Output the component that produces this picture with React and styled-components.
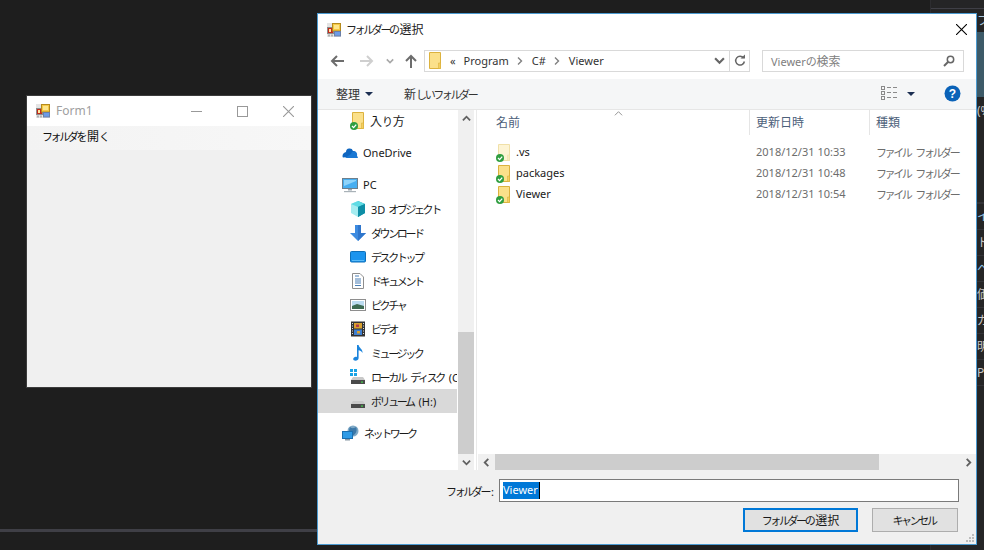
import React from 'react'
import styled, { createGlobalStyle } from 'styled-components'

const GlobalStyle = createGlobalStyle`
  html, body {
    margin: 0;
    padding: 0;
    background: #1e1e1e;
  }
  * {
    box-sizing: border-box;
  }
`

const Screen = styled.div`
  position: relative;
  width: 984px;
  height: 550px;
  overflow: hidden;
  display: flex;
  background: #1e1e1e;
  font-family: 'Noto Sans', 'Noto Sans CJK JP', sans-serif;
  font-size: 11px;
  color: #1a1a1a;
`

const KanaRun = styled.span`
  font-size: 11px;
  letter-spacing: -2.4px;
  padding-right: 2px;
`

const KanjiRun = styled.span`
  font-size: 12px;
`

// Meiryo UI style: kana much narrower than kanji
const Jp = ({ children }) => (
  <span>
    {children.split(/([\u3040-\u30ff]+|[\u4e00-\u9fff]+)/).map((run, i) => {
      if (/[\u3040-\u30ff]/.test(run)) return <KanaRun key={i}>{run}</KanaRun>
      if (/[\u4e00-\u9fff]/.test(run)) return <KanjiRun key={i}>{run}</KanjiRun>
      return run
    })}
  </span>
)

const EditorArea = styled.div`
  flex: 1;
  padding-top: 529px;
`

const Rule = styled.div`
  height: 3px;
  background: #3f3f46;
`

const SidePanel = styled.div`
  width: 54px;
  display: flex;
  flex-direction: column;
  overflow: hidden;
  border-left: 1px solid #2d2d30;
  background: #252526;
  font-size: 12px;
`

const PanelTop = styled.div`
  height: 9px;
  border-bottom: 1px solid #3f3f46;
`

const PanelTitle = styled.div`
  height: 23px;
  padding-left: 46px;
  line-height: 23px;
  white-space: nowrap;
  color: #a8c6dc;
`

const PanelBanner = styled.div`
  height: 65px;
  background: #3d5a68;
`

const PanelGap = styled.div`
  height: 107px;
  padding-left: 46px;
  padding-top: 5px;
  white-space: nowrap;
  color: #c8c8c8;
  border-bottom: 2px solid #333337;
`

const PanelRow = styled.div`
  height: 26px;
  padding-left: 46px;
  line-height: 26px;
  white-space: nowrap;
  color: ${p => p.$accent ? '#8fc3ea' : '#c8c8c8'};
  border-bottom: 1px solid #333337;
`

const Form = styled.div`
  position: absolute;
  left: 26px;
  top: 95px;
  width: 286px;
  height: 293px;
  display: flex;
  flex-direction: column;
  border: 1px solid #3c3c3c;
  background: #f0f0f0;
`

const FormTitle = styled.div`
  height: 30px;
  flex: none;
  display: flex;
  align-items: center;
  padding-left: 9px;
  background: #fff;
  color: #a0a0a0;
`

const FormTitleText = styled.span`
  margin-left: 6px;
  margin-bottom: 2px;
  flex: 1;
  font-size: 12px;
`

const WinButton = styled.div`
  width: 46px;
  height: 30px;
  display: flex;
  align-items: center;
  justify-content: center;
`

const MenuStrip = styled.div`
  height: 24px;
  flex: none;
  padding-left: 15px;
  line-height: 22px;
  color: #111;
  background: linear-gradient(to right, #f3f3f3, #f7f7f7);
`

const Dialog = styled.div`
  position: absolute;
  left: 317px;
  top: 13px;
  width: 660px;
  height: 532px;
  display: flex;
  flex-direction: column;
  border: 1px solid #4b9ad0;
  background: #fff;
`

const DialogTitle = styled.div`
  height: 31px;
  flex: none;
  display: flex;
  align-items: center;
  padding-left: 9px;
  color: #222;
`

const DialogTitleText = styled.span`
  margin-left: 5px;
  margin-bottom: 2px;
  flex: 1;
`

const CloseButton = styled.div`
  width: 30px;
  height: 31px;
  display: flex;
  align-items: center;
  justify-content: center;
`

const NavBar = styled.div`
  height: 34px;
  flex: none;
  display: flex;
  align-items: center;
  padding-left: 4px;
  padding-bottom: 3px;
`

const NavButton = styled.div`
  width: ${p => p.$w}px;
  height: 22px;
  display: flex;
  align-items: center;
  justify-content: center;
`

const AddressBox = styled.div`
  width: 326px;
  height: 22px;
  margin-right: 12px;
  display: flex;
  align-items: center;
  padding-left: 2px;
  border: 1px solid #d9d9d9;
  color: #333;
`

const Crumb = styled.span`
  margin-left: ${p => p.$gap}px;
  white-space: nowrap;
`

const CrumbSep = styled.span`
  margin-left: ${p => p.$gap}px;
  display: flex;
`

const AddressEnd = styled.div`
  margin-left: auto;
  display: flex;
  align-items: center;
  height: 100%;
`

const RefreshButton = styled.div`
  width: 20px;
  height: 100%;
  margin-left: 4px;
  display: flex;
  align-items: center;
  justify-content: center;
  border-left: 1px solid #d9d9d9;
`

const SearchBox = styled.div`
  width: 202px;
  height: 22px;
  display: flex;
  align-items: center;
  justify-content: space-between;
  padding: 0 8px;
  border: 1px solid #d9d9d9;
  color: #808080;
`

const ToolBar = styled.div`
  height: 31px;
  flex: none;
  display: flex;
  align-items: center;
  padding-left: 18px;
  padding-bottom: 1px;
  background: #f5f6f7;
  border-bottom: 1px solid #e6e6e6;
  color: #333;
`

const ToolLabel = styled.span`
  white-space: nowrap;
`

const ToolSpacer = styled.div`
  flex: 1;
`

const Caret = styled.span`
  width: 0;
  height: 0;
  border-left: 4px solid transparent;
  border-right: 4px solid transparent;
  border-top: 4px solid #1c2f52;
  margin-left: ${p => p.$gap}px;
  margin-right: ${p => p.$after}px;
`

const HelpSlot = styled.span`
  display: flex;
  margin-right: 15px;
`

const Body = styled.div`
  height: 360px;
  flex: none;
  display: grid;
  grid-template-columns: 140px 16px 4px 1fr;
`

const Tree = styled.div`
  overflow: hidden;
  padding-right: 1px;
  margin-top: -1px;
`

const TreeGroup = styled.div`
  margin-bottom: 8px;
`

const TreeRow = styled.div`
  height: 24px;
  display: flex;
  align-items: center;
  gap: 5px;
  padding-left: ${p => p.$child ? 32 : 24}px;
  white-space: nowrap;
  overflow: hidden;
  color: #1a1a1a;
  background: ${p => p.$selected ? '#d9d9d9' : 'transparent'};
  svg {
    flex: none;
  }
`

const LatinLabel = styled.span`
  padding-bottom: 2px;
`

const VScroll = styled.div`
  display: flex;
  flex-direction: column;
  background: #f0f0f0;
`

const ScrollButton = styled.div`
  flex: none;
  width: ${p => p.$w || 16}px;
  height: 16px;
  display: flex;
  align-items: center;
  justify-content: center;
  background: #f0f0f0;
`

const VTrack = styled.div`
  flex: 1;
  padding-top: 206px;
`

const VThumb = styled.div`
  height: 100%;
  background: #cdcdcd;
`

const Splitter = styled.div`
  position: relative;
  &::after {
    content: '';
    position: absolute;
    left: 2px;
    top: 0;
    bottom: 0;
    width: 1px;
    background: #eaeaea;
  }
`

const ListPane = styled.div`
  display: flex;
  flex-direction: column;
  min-width: 0;
`

const ListHeader = styled.div`
  position: relative;
  height: 25px;
  flex: none;
  display: grid;
  grid-template-columns: 272px 120px 1fr;
  color: #4c607a;
`

const HeaderCell = styled.div`
  padding-left: ${p => p.$pad}px;
  line-height: 25px;
  border-right: ${p => p.$last ? 'none' : '1px solid #e5e5e5'};
`

const SortMark = styled.span`
  position: absolute;
  left: 136px;
  top: -1px;
  display: flex;
`

const ListRows = styled.div`
  flex: 1;
  padding-top: 7px;
`

const FileRow = styled.div`
  height: 21px;
  display: grid;
  grid-template-columns: 272px 120px 1fr;
  align-items: center;
`

const FileName = styled.div`
  display: flex;
  align-items: center;
  gap: 5px;
  padding-left: 18px;
  color: #1a1a1a;
`

const FileMeta = styled.div`
  padding: 0 0 2px 6px;
  white-space: nowrap;
  color: #6d6d6d;
`

const HScroll = styled.div`
  height: 16px;
  flex: none;
  display: flex;
  background: #f0f0f0;
`

const HThumb = styled.div`
  width: 384px;
  background: #cdcdcd;
`

const HTrack = styled.div`
  flex: 1;
`

const Footer = styled.div`
  position: relative;
  flex: 1;
  display: flex;
  flex-direction: column;
  gap: 6px;
  padding: 9px 17px 0 0;
  background: #f0f0f0;
`

const InputRow = styled.div`
  display: flex;
  align-items: center;
  justify-content: flex-end;
  gap: 5px;
`

const InputLabel = styled.label`
  color: #1a1a1a;
`

const TextInput = styled.div`
  width: 460px;
  height: 23px;
  padding: 2px 0 0 3px;
  border: 1px solid #7a7a7a;
  background: #fff;
  display: flex;
  align-items: flex-start;
`

const Selection = styled.span`
  height: 17px;
  line-height: 16px;
  padding-right: 1px;
  background: #0078d7;
  color: #fff;
`

const TextCaret = styled.span`
  width: 1px;
  height: 17px;
  background: #000;
`

const ButtonRow = styled.div`
  display: flex;
  justify-content: flex-end;
  gap: 14px;
  padding-right: 1px;
`

const DialogButton = styled.div`
  width: ${p => p.$w}px;
  height: 24px;
  display: flex;
  align-items: center;
  justify-content: center;
  background: #e1e1e1;
  border: ${p => p.$primary ? '2px solid #0078d7' : '1px solid #adadad'};
  color: #1a1a1a;
`

const Grip = styled.span`
  position: absolute;
  right: 1px;
  bottom: 1px;
  display: flex;
`

const AppIcon = () => (
  <svg width="14" height="14" viewBox="0 0 14 14">
    <rect x="0" y="0" width="14" height="14" fill="#e4e4e4" />
    <rect x="0.5" y="4.5" width="6" height="6" fill="#c4281c" stroke="#8c8c8c" />
    <rect x="2" y="6" width="2" height="3" fill="#ffe9a0" />
    <rect x="5.5" y="0.5" width="8" height="7.5" fill="#f6c944" stroke="#b58a1c" />
    <rect x="7" y="2" width="5" height="4" fill="#fde58a" />
    <rect x="7.5" y="8.5" width="6" height="4.5" fill="#6c9be6" stroke="#6a7fa6" />
    <rect x="1" y="11.5" width="2" height="2" fill="#b0b0b0" />
    <rect x="4" y="11.5" width="2" height="2" fill="#b0b0b0" />
  </svg>
)

const Cross = ({ size, color }) => (
  <svg width={size} height={size} viewBox="0 0 10 10">
    <path d="M0 0L10 10M10 0L0 10" stroke={color} strokeWidth="1" fill="none" />
  </svg>
)

const Chevron = ({ dir = 'down', color = '#606060', size = 9, width = 2 }) => {
  const paths = {
    down: 'M1 3L5 7L9 3',
    up: 'M1 7L5 3L9 7',
    left: 'M7 1L3 5L7 9',
    right: 'M3 1L7 5L3 9',
  }
  return (
    <svg width={size} height={size} viewBox="0 0 10 10">
      <path d={paths[dir]} stroke={color} strokeWidth={width} fill="none" />
    </svg>
  )
}

const Arrow = ({ dir, color }) => {
  const paths = {
    left: 'M14 7H2M7 2L2 7L7 12',
    right: 'M0 7H12M7 2L12 7L7 12',
    up: 'M7 14V2M2 7L7 2L12 7',
  }
  return (
    <svg width="14" height="14" viewBox="0 0 14 14">
      <path d={paths[dir]} stroke={color} strokeWidth="2" fill="none" />
    </svg>
  )
}

const Check = ({ x, y }) => (
  <g transform={`translate(${x} ${y})`}>
    <circle cx="4" cy="4" r="4" fill="#2f9e3f" />
    <path d="M2 4L3.6 5.6L6.2 2.6" stroke="#fff" strokeWidth="1.3" fill="none" />
  </g>
)

const FolderIcon = ({ synced, faded }) => (
  <svg width="15" height="18" viewBox="0 0 15 18">
    <path
      d="M2.5 0.5H13.5V16.5H2.5Z"
      fill={faded ? '#fdf4d4' : '#fbe08a'}
      stroke={faded ? '#f0e0a8' : '#dcb23e'}
    />
    <path d="M11.5 11V16.5H13.5V11Z" fill={faded ? '#f8ecc0' : '#f4cf5f'} stroke={faded ? '#f0e0a8' : '#dcb23e'} strokeWidth="0.6" />
    {synced && <Check x={0} y={10} />}
  </svg>
)

const RefreshIcon = () => (
  <svg width="12" height="13" viewBox="0 0 12 13">
    <path d="M9.6 4A4.4 4.4 0 1 0 10.4 7.5" stroke="#666" strokeWidth="1.5" fill="none" />
    <path d="M6.5 4.5H11V0.5Z" fill="#666" />
  </svg>
)

const SearchIcon = () => (
  <svg width="12" height="12" viewBox="0 0 12 12">
    <circle cx="7.5" cy="4.5" r="3.2" stroke="#666" strokeWidth="1.5" fill="none" />
    <path d="M5 7L1 11" stroke="#666" strokeWidth="2" fill="none" />
  </svg>
)

const ViewIcon = () => (
  <svg width="17" height="15" viewBox="0 0 17 15">
    <g fill="none" stroke="#8a8a8a">
      <rect x="0.5" y="0.5" width="3" height="3" />
      <rect x="0.5" y="5.5" width="3" height="3" />
      <rect x="0.5" y="10.5" width="3" height="3" />
    </g>
    <path d="M6 1.5H10M12 1.5H16M6 6.5H10M12 6.5H16M6 11.5H10M12 11.5H16" stroke="#8a8a8a" fill="none" />
  </svg>
)

const HelpIcon = () => (
  <svg width="17" height="17" viewBox="0 0 17 17">
    <circle cx="8.5" cy="8.5" r="8" fill="#0a62b8" />
    <text x="8.5" y="13" textAnchor="middle" fontFamily="Liberation Sans, sans-serif" fontWeight="700" fontSize="12" fill="#fff">?</text>
  </svg>
)

const CloudIcon = () => (
  <svg width="16" height="16" viewBox="0 0 16 16">
    <path d="M4 7A3.6 3.6 0 0 1 11 6A3 3 0 0 1 14.5 8.2L6 12L1 12.6C0 11 0.6 8 4 7Z" fill="#0f66c0" />
    <path d="M3 13L9 9A3 3 0 0 1 15 10.5L16 13Z" fill="#1a78d4" />
  </svg>
)

const PcIcon = () => (
  <svg width="16" height="16" viewBox="0 0 16 16">
    <rect x="0.5" y="1.5" width="15" height="10" fill="#47aef0" stroke="#6d7f8c" />
    <path d="M2 3H14V4L2 9Z" fill="#8fd4fa" />
    <rect x="6" y="12" width="4" height="1.5" fill="#9aa5ad" />
    <rect x="2" y="14" width="12" height="1.2" fill="#a9b2b8" />
  </svg>
)

const CubeIcon = () => (
  <svg width="16" height="16" viewBox="0 0 16 16">
    <path d="M8 0L15 3V12L8 16Z" fill="#149eb0" />
    <path d="M8 0L1 3V12L8 16Z" fill="#a5ecf0" />
    <path d="M1 3L8 6L15 3L8 0Z" fill="#5fdbe4" />
    <path d="M8 6V16L15 12V3Z" fill="#0e8ea6" />
  </svg>
)

const DownloadIcon = () => (
  <svg width="16" height="16" viewBox="0 0 16 16">
    <path d="M5 0H11V8H16L8 16L0 8H5Z" fill="#3d8be0" />
    <path d="M8 0H11V8H16L8 16Z" fill="#2f76cc" />
  </svg>
)

const DesktopIcon = () => (
  <svg width="16" height="16" viewBox="0 0 16 16">
    <rect x="0.5" y="2.5" width="15" height="10.5" rx="1" fill="#1b94ee" stroke="#0e6fb8" />
    <rect x="2" y="11" width="12" height="1" fill="#5cbcf8" />
  </svg>
)

const DocIcon = () => (
  <svg width="16" height="16" viewBox="0 0 16 16">
    <path d="M2.5 0.5H10L13.5 4V15.5H2.5Z" fill="#fff" stroke="#8e8e8e" />
    <path d="M5 3H9M5 6H11M5 8H11M5 10H11M5 12.5H11" stroke="#4a7fb5" fill="none" />
  </svg>
)

const PictureIcon = () => (
  <svg width="16" height="16" viewBox="0 0 16 16">
    <rect x="0.5" y="2.5" width="15" height="11" fill="#fff" stroke="#8e8e8e" />
    <rect x="2" y="4" width="12" height="8" fill="#bcdcf0" />
    <path d="M2 9L7 7L14 9V12H2Z" fill="#3d6b52" />
  </svg>
)

const VideoIcon = () => (
  <svg width="16" height="16" viewBox="0 0 16 16">
    <rect x="1" y="0.5" width="14" height="15" fill="#333" />
    <rect x="4" y="2" width="8" height="5.5" fill="#d9a02e" />
    <rect x="4" y="8.5" width="8" height="5.5" fill="#3f7fd0" />
    <rect x="6" y="3.5" width="3" height="2.5" fill="#b13c4e" />
    <rect x="7" y="10" width="3" height="2.5" fill="#d9a02e" />
    <path d="M2.5 2V14M13.5 2V14" stroke="#ddd" strokeDasharray="1 1.5" fill="none" />
  </svg>
)

const MusicIcon = () => (
  <svg width="16" height="16" viewBox="0 0 16 16">
    <path d="M7 0H8.6C9 3 13 4 12.5 8C11.5 6 10 5.5 8.6 5.2V13C8.6 15 6.5 16 4.5 15.6C2.5 15 3 12.6 5 12C5.7 11.8 6.4 11.8 7 12Z" fill="#1b84dc" />
  </svg>
)

const DiskIcon = ({ windows }) => (
  <svg width="16" height="16" viewBox="0 0 16 16">
    {windows && (
      <g fill="#18a3e6">
        <rect x="0" y="0" width="3" height="3" />
        <rect x="4" y="0" width="3" height="3" />
        <rect x="0" y="4" width="3" height="3" />
        <rect x="4" y="4" width="3" height="3" />
      </g>
    )}
    <path d="M3 8H13L15 11H1Z" fill="#c9c9c9" />
    <rect x="1" y="11" width="14" height="4" fill="#4a4a4a" />
    <rect x="11" y="12.5" width="2" height="1.2" fill="#44d04a" />
  </svg>
)

const NetworkIcon = () => (
  <svg width="17" height="16" viewBox="0 0 17 16">
    <circle cx="11" cy="6" r="5.5" fill="#7fa9c6" />
    <path d="M8 2C10 4 13 3 14 2C16 6 13 10 10 11C10 8 7 7 7 5Z" fill="#3c78a8" />
    <rect x="0.5" y="6.5" width="10" height="7" fill="#2f9be6" stroke="#1b70b0" />
    <rect x="3" y="14" width="5" height="1.5" fill="#8a9aa6" />
  </svg>
)

const Separator = () => (
  <svg width="6" height="8" viewBox="0 0 6 8">
    <path d="M1 0.5L4.5 4L1 7.5" stroke="#808080" strokeWidth="1.4" fill="none" />
  </svg>
)

const GripIcon = () => (
  <svg width="9" height="9" viewBox="0 0 9 9" fill="#bcbcbc">
    <rect x="6" y="0" width="2" height="2" />
    <rect x="3" y="3" width="2" height="2" />
    <rect x="6" y="3" width="2" height="2" />
    <rect x="0" y="6" width="2" height="2" />
    <rect x="3" y="6" width="2" height="2" />
    <rect x="6" y="6" width="2" height="2" />
  </svg>
)

const pcItems = [
  { label: '3D オブジェクト', icon: <CubeIcon /> },
  { label: 'ダウンロード', icon: <DownloadIcon /> },
  { label: 'デスクトップ', icon: <DesktopIcon /> },
  { label: 'ドキュメント', icon: <DocIcon /> },
  { label: 'ピクチャ', icon: <PictureIcon /> },
  { label: 'ビデオ', icon: <VideoIcon /> },
  { label: 'ミュージック', icon: <MusicIcon /> },
  { label: 'ローカル ディスク (C:)', icon: <DiskIcon windows /> },
  { label: 'ボリューム (H:)', icon: <DiskIcon />, selected: true },
]

const files = [
  { name: '.vs', date: '2018/12/31 10:33', faded: true },
  { name: 'packages', date: '2018/12/31 10:48' },
  { name: 'Viewer', date: '2018/12/31 10:54' },
]

const panelRows = [
  { text: 'イ', accent: true },
  { text: 'ト' },
  { text: 'ヘ', accent: true },
  { text: '価' },
  { text: 'ガ' },
  { text: '明' },
  { text: 'P' },
]

export default function App() {
  return (
    <Screen>
      <GlobalStyle />
      <EditorArea>
        <Rule />
      </EditorArea>
      <SidePanel>
        <PanelTop />
        <PanelTitle>ファイル</PanelTitle>
        <PanelBanner />
        <PanelGap>(%)</PanelGap>
        {panelRows.map(r => (
          <PanelRow key={r.text} $accent={r.accent}>{r.text}</PanelRow>
        ))}
      </SidePanel>

      <Form>
        <FormTitle>
          <AppIcon />
          <FormTitleText>Form1</FormTitleText>
          <WinButton>
            <svg width="11" height="11" viewBox="0 0 11 11">
              <path d="M0 5.5H11" stroke="#999" fill="none" />
            </svg>
          </WinButton>
          <WinButton>
            <svg width="11" height="11" viewBox="0 0 11 11">
              <rect x="0.5" y="0.5" width="10" height="10" stroke="#999" fill="none" />
            </svg>
          </WinButton>
          <WinButton>
            <Cross size={11} color="#999" />
          </WinButton>
        </FormTitle>
        <MenuStrip><Jp>フォルダを開く</Jp></MenuStrip>
      </Form>

      <Dialog>
        <DialogTitle>
          <AppIcon />
          <DialogTitleText><Jp>フォルダーの選択</Jp></DialogTitleText>
          <CloseButton>
            <Cross size={11} color="#000" />
          </CloseButton>
        </DialogTitle>

        <NavBar>
          <NavButton $w={30}><Arrow dir="left" color="#6d6d6d" /></NavButton>
          <NavButton $w={30}><Arrow dir="right" color="#cfcfcf" /></NavButton>
          <NavButton $w={16}><Chevron color="#a8a8a8" size={8} /></NavButton>
          <NavButton $w={26}><Arrow dir="up" color="#6d6d6d" /></NavButton>
          <AddressBox>
            <FolderIcon />
            <Crumb $gap={8}>«</Crumb>
            <Crumb $gap={8}>Program</Crumb>
            <CrumbSep $gap={8}><Separator /></CrumbSep>
            <Crumb $gap={9}>C#</Crumb>
            <CrumbSep $gap={8}><Separator /></CrumbSep>
            <Crumb $gap={9}>Viewer</Crumb>
            <AddressEnd>
              <Chevron color="#666" size={11} />
              <RefreshButton><RefreshIcon /></RefreshButton>
            </AddressEnd>
          </AddressBox>
          <SearchBox>
            <Jp>Viewerの検索</Jp>
            <SearchIcon />
          </SearchBox>
        </NavBar>

        <ToolBar>
          <ToolLabel><Jp>整理</Jp></ToolLabel>
          <Caret $gap={5} $after={31} />
          <ToolLabel><Jp>新しいフォルダー</Jp></ToolLabel>
          <ToolSpacer />
          <ViewIcon />
          <Caret $gap={9} $after={29} />
          <HelpSlot><HelpIcon /></HelpSlot>
        </ToolBar>

        <Body>
          <Tree>
            <TreeGroup>
              <TreeRow $child><FolderIcon synced /><Jp>入り方</Jp></TreeRow>
            </TreeGroup>
            <TreeGroup>
              <TreeRow><CloudIcon /><LatinLabel>OneDrive</LatinLabel></TreeRow>
            </TreeGroup>
            <TreeGroup>
              <TreeRow><PcIcon /><LatinLabel>PC</LatinLabel></TreeRow>
              {pcItems.map(item => (
                <TreeRow key={item.label} $child $selected={item.selected}>
                  {item.icon}
                  <Jp>{item.label}</Jp>
                </TreeRow>
              ))}
            </TreeGroup>
            <TreeGroup>
              <TreeRow><NetworkIcon /><Jp>ネットワーク</Jp></TreeRow>
            </TreeGroup>
          </Tree>

          <VScroll>
            <ScrollButton><Chevron dir="up" /></ScrollButton>
            <VTrack><VThumb /></VTrack>
            <ScrollButton><Chevron dir="down" /></ScrollButton>
          </VScroll>

          <Splitter />

          <ListPane>
            <ListHeader>
              <HeaderCell $pad={18}><Jp>名前</Jp></HeaderCell>
              <HeaderCell $pad={6}><Jp>更新日時</Jp></HeaderCell>
              <HeaderCell $pad={6} $last><Jp>種類</Jp></HeaderCell>
              <SortMark><Chevron dir="up" color="#8a8a8a" width={1} size={9} /></SortMark>
            </ListHeader>
            <ListRows>
              {files.map(f => (
                <FileRow key={f.name}>
                  <FileName>
                    <FolderIcon synced faded={f.faded} />
                    <LatinLabel>{f.name}</LatinLabel>
                  </FileName>
                  <FileMeta>{f.date}</FileMeta>
                  <FileMeta><Jp>ファイル フォルダー</Jp></FileMeta>
                </FileRow>
              ))}
            </ListRows>
            <HScroll>
              <ScrollButton $w={17}><Chevron dir="left" /></ScrollButton>
              <HThumb />
              <HTrack />
              <ScrollButton><Chevron dir="right" /></ScrollButton>
            </HScroll>
          </ListPane>
        </Body>

        <Footer>
          <InputRow>
            <InputLabel><Jp>フォルダー:</Jp></InputLabel>
            <TextInput>
              <Selection>Viewer</Selection>
              <TextCaret />
            </TextInput>
          </InputRow>
          <ButtonRow>
            <DialogButton $w={115} $primary><Jp>フォルダーの選択</Jp></DialogButton>
            <DialogButton $w={86}><Jp>キャンセル</Jp></DialogButton>
          </ButtonRow>
          <Grip><GripIcon /></Grip>
        </Footer>
      </Dialog>
    </Screen>
  )
}
